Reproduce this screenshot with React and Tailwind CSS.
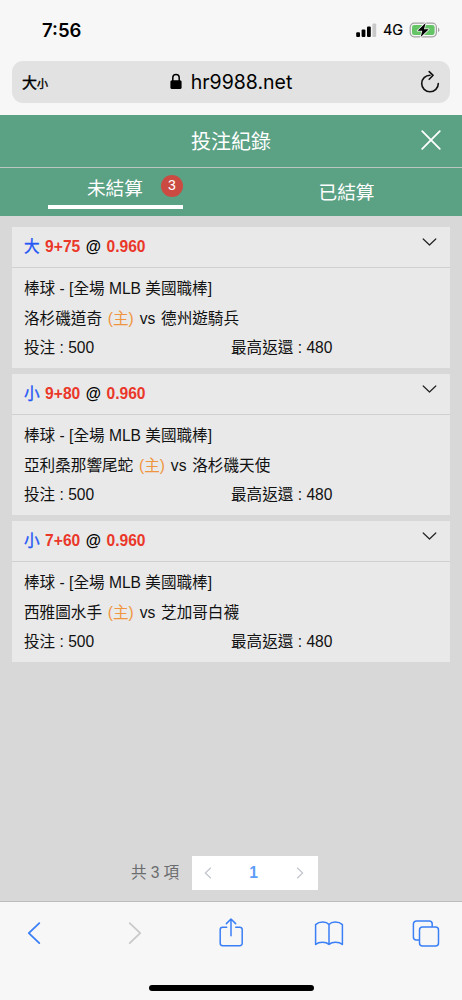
import React from 'react';

const bets = [
  { side: '大', line: '9+75', odds: '0.960', home: '洛杉磯道奇', away: '德州遊騎兵', stake: 500, payout: 480 },
  { side: '小', line: '9+80', odds: '0.960', home: '亞利桑那響尾蛇', away: '洛杉磯天使', stake: 500, payout: 480 },
  { side: '小', line: '7+60', odds: '0.960', home: '西雅圖水手', away: '芝加哥白襪', stake: 500, payout: 480 },
];

const StatusBar = () => (
  <div className="flex h-[60px] shrink-0 items-start justify-between pl-[42px] pr-[22px] pt-[19px] font-['Inter','Noto_Sans_CJK_TC',sans-serif] text-black">
    <span className="text-[18.5px] font-semibold leading-[22px]">7:56</span>
    <div className="flex h-[22px] items-center">
      <svg className="h-[14px] w-[21px]" viewBox="0 0 21 14">
        <rect x="0.2" y="9.2" width="3.8" height="4.8" rx="1" />
        <rect x="5.6" y="6.6" width="3.8" height="7.4" rx="1" />
        <rect x="11" y="3.6" width="3.8" height="10.4" rx="1" />
        <rect x="16.4" y="0.4" width="3.8" height="13.6" rx="1" fill="#c9c9c9" />
      </svg>
      <span className="ml-[6px] w-[20px] text-[14.5px] font-normal leading-[22px] tracking-[-0.2px] [-webkit-text-stroke:0.2px_#000]">4G</span>
      <svg className="ml-[6px] h-[16px] w-[31px]" viewBox="0 0 31 16">
        <rect x="1.2" y="1.2" width="26.2" height="13.6" rx="4" fill="none" stroke="#a3a3a3" strokeWidth="1.2" />
        <rect x="3" y="3" width="22.6" height="10" rx="2.2" fill="#65c466" />
        <path d="M29 5.8v4.4c.9-.4 1.4-1.2 1.4-2.2s-.5-1.8-1.4-2.2z" fill="#a3a3a3" />
        <path d="M16.6.9 8.6 8.7h4.7l-1.6 6.4 8-7.8H15z" fill="#000" stroke="#f7f7f7" strokeWidth="1.6" paintOrder="stroke" strokeLinejoin="round" />
      </svg>
    </div>
  </div>
);

const AddressBar = () => (
  <div className="mx-[12px] mt-[0.5px] mb-[12px] grid h-[42px] shrink-0 grid-cols-[1fr_auto_1fr] items-center rounded-[11px] bg-[#e2e2e2] pl-[10px] pr-[10px] font-['Inter','Noto_Sans_CJK_TC',sans-serif] text-black">
    <div className="mt-[3px] flex items-baseline leading-[22px] [-webkit-text-stroke:0.4px_#000]">
      <span className="text-[15px]">大</span>
      <span className="text-[11px]">小</span>
    </div>
    <div className="flex items-center gap-[9px]">
      <svg className="h-[17px] w-[12px]" viewBox="0 0 12 17">
        <rect x="0.4" y="7.2" width="11.2" height="8.9" rx="1.6" />
        <path d="M2.8 8V4.6a3.2 3.2 0 0 1 6.4 0V8" fill="none" stroke="#000" strokeWidth="1.5" />
      </svg>
      <span className="text-[19.5px] leading-[24px]">hr9988.net</span>
    </div>
    <svg className="h-[24px] w-[20px] justify-self-end" viewBox="0 0 20 24" fill="none" stroke="#111" strokeWidth="1.6" strokeLinecap="round" strokeLinejoin="round">
      <path d="M10 5.2a8.3 8.3 0 1 0 8.3 8.3" />
      <path d="m9.2 1.6 3.9 3.7-3.9 4" />
    </svg>
  </div>
);

const Header = () => (
  <header className="h-[101px] shrink-0 bg-[#5ba184] text-white">
    <div className="grid h-[53.5px] grid-cols-[1fr_auto_1fr] items-center border-b-[1.5px] border-[#bac6c0] pr-[20px]">
      <h1 className="col-start-2 ml-[20px] mt-[3px] text-[20px] leading-[28px]">投注紀錄</h1>
      <svg className="mb-[2px] h-[22px] w-[22px] justify-self-end" viewBox="0 0 22 22" stroke="#fff" strokeWidth="1.8" strokeLinecap="round">
        <path d="m2.2 2.2 17.6 17.6M19.8 2.2 2.2 19.8" />
      </svg>
    </div>
    <nav className="grid h-[47.5px] grid-cols-2">
      <div className="ml-[48px] flex h-[41px] w-[135px] items-center justify-end gap-[18px] border-b-[4px] border-white text-[18.7px]">
        <span className="mt-[4px] leading-[26px]">未結算</span>
        <span className="mb-[2px] h-[22px] w-[22px] rounded-full bg-[#cb4b43] text-center text-[14px] leading-[21px]">3</span>
      </div>
      <div className="flex h-[49px] items-center justify-center text-[18.7px] leading-[26px]">已結算</div>
    </nav>
  </header>
);

const BetCard = ({ bet }) => (
  <section className="h-[141px] bg-[#e9e9e9] text-[15.6px] text-[#111]">
    <div className="flex h-[40.5px] items-center justify-between border-b-[1.5px] border-[#d0d0d0] px-[12px]">
      <div className="flex gap-[5.5px] font-bold leading-[24px]">
        <span className="font-normal text-[#2457f5] [-webkit-text-stroke:0.35px_#2457f5]">{bet.side}</span>
        <span className="text-[#ea3729]">{bet.line}</span>
        <span className="text-black">@</span>
        <span className="text-[#ea3729]">{bet.odds}</span>
      </div>
      <svg className="mb-[9px] mr-[1px] h-[8px] w-[15px]" viewBox="0 0 15 8" fill="none" stroke="#222" strokeWidth="1.2" strokeLinecap="round" strokeLinejoin="round">
        <path d="m1.2 1 6.3 6 6.3-6" />
      </svg>
    </div>
    <div className="px-[12px] pt-[6.5px] leading-[29.5px]">
      <p>棒球 - [全場 MLB 美國職棒]</p>
      <p className="[word-spacing:1.5px]">
        {bet.home} <span className="text-[#f0953f]">(主)</span> vs {bet.away}
      </p>
      <div className="grid grid-cols-2">
        <span>投注 : {bet.stake}</span>
        <span>最高返還 : {bet.payout}</span>
      </div>
    </div>
  </section>
);

const Chevron = ({ d }) => (
  <svg className="h-[12px] w-[8px]" viewBox="0 0 8 12" fill="none" stroke="#c0c4cc" strokeWidth="1.2">
    <path d={d} />
  </svg>
);

const Pagination = () => (
  <div className="mt-auto mb-[11.5px] flex items-center pl-[131px] text-[15.6px] text-[#6b6c6e]">
    <span className="w-[60.5px] [word-spacing:-0.2px]">共 3 項</span>
    <div className="flex h-[33.5px] w-[126px] items-center justify-between bg-white pl-[12px] pr-[14px]">
      <Chevron d="M6.8.8 1.4 6l5.4 5.2" />
      <span className="font-bold text-[#5c9df8]">1</span>
      <Chevron d="m1.2.8 5.4 5.2-5.4 5.2" />
    </div>
  </div>
);

const Toolbar = () => (
  <footer className="flex h-[99px] shrink-0 flex-col items-center justify-between border-t border-[#bdbdbd] bg-[#f7f7f7] pb-[9.5px]">
    <div className="flex w-full items-center pl-[27px] pt-[16px]">
      <svg className="h-[30px] w-[14px]" viewBox="0 0 14 30" fill="none" stroke="#3a7ff6" strokeWidth="1.8" strokeLinecap="round" strokeLinejoin="round">
        <path d="M12.3 5.1 1.8 15.1l10.5 10" />
      </svg>
      <svg className="ml-[87px] h-[30px] w-[14px]" viewBox="0 0 14 30" fill="none" stroke="#c9c9c9" strokeWidth="1.8" strokeLinecap="round" strokeLinejoin="round">
        <path d="m1.7 5.1 10.5 10-10.5 10" />
      </svg>
      <svg className="ml-[76px] h-[30px] w-[26px]" viewBox="0 0 26 30" fill="none" stroke="#3a7ff6" strokeWidth="1.5" strokeLinecap="round" strokeLinejoin="round">
        <path d="M8.7 9.2H4.6a2.4 2.4 0 0 0-2.4 2.4v13.7a2.4 2.4 0 0 0 2.4 2.4h17.2a2.4 2.4 0 0 0 2.4-2.4V11.6a2.4 2.4 0 0 0-2.4-2.4h-4.1" />
        <path d="M13 17.7V1.2M8.4 5.6 13 1l4.6 4.6" />
      </svg>
      <svg className="ml-[70px] h-[30px] w-[30px]" viewBox="0 0 30 30" fill="none" stroke="#3a7ff6" strokeWidth="1.5" strokeLinecap="round" strokeLinejoin="round">
        <path d="M15 6.4c-1.3-1.5-3.5-2.3-6.2-2.3-3 0-5.4.8-7.2 2.5v19.9c1.5-1.4 4-2.2 6.9-2.2 2.6 0 4.9.7 6.5 2.1 1.6-1.4 3.9-2.1 6.5-2.1 2.9 0 5.4.8 6.9 2.2V6.6c-1.8-1.7-4.2-2.5-7.2-2.5-2.7 0-4.9.8-6.2 2.3zM15 6.4v20" />
      </svg>
      <svg className="ml-[68px] h-[30px] w-[28px]" viewBox="0 0 28 30" fill="none" stroke="#3a7ff6" strokeWidth="1.5" strokeLinejoin="round">
        <path d="M7.2 22H4.4a3 3 0 0 1-3-3V6a3 3 0 0 1 3-3h12.8a3 3 0 0 1 3 3v2.7" />
        <rect x="7.5" y="9" width="19" height="19" rx="3" />
      </svg>
    </div>
    <div className="h-[6px] w-[165px] rounded-full bg-black" />
  </footer>
);

export default function App() {
  return (
    <div className="flex h-[1000px] w-[462px] flex-col overflow-hidden bg-[#f7f7f7] font-['Liberation_Sans','Noto_Sans_CJK_TC',sans-serif]">
      <StatusBar />
      <AddressBar />
      <Header />
      <main className="flex flex-1 flex-col bg-[#d8d8d8] pt-[11.5px]">
        <div className="flex flex-col gap-[6px] px-[12px]">
          {bets.map((bet, idx) => (
            <BetCard key={idx} bet={bet} />
          ))}
        </div>
        <Pagination />
      </main>
      <Toolbar />
    </div>
  );
}
